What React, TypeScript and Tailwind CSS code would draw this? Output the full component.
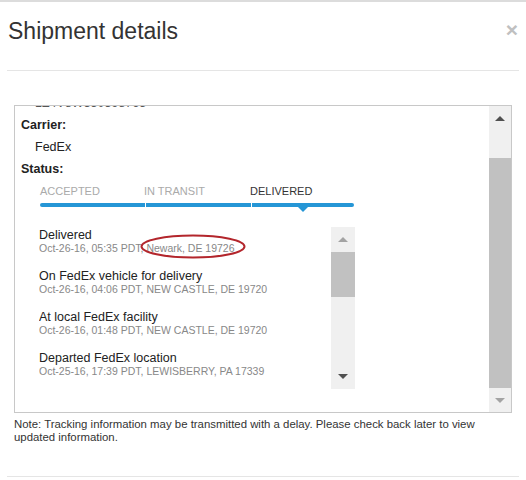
import React from 'react'

interface TrackingEvent {
  title: string
  detail: string
}

const events: TrackingEvent[] = [
  { title: 'Delivered', detail: 'Oct-26-16, 05:35 PDT, Newark, DE 19726' },
  { title: 'On FedEx vehicle for delivery', detail: 'Oct-26-16, 04:06 PDT, NEW CASTLE, DE 19720' },
  { title: 'At local FedEx facility', detail: 'Oct-26-16, 01:48 PDT, NEW CASTLE, DE 19720' },
  { title: 'Departed FedEx location', detail: 'Oct-25-16, 17:39 PDT, LEWISBERRY, PA 17339' },
]

function Arrow({ up, color }: { up?: boolean; color: string }) {
  return (
    <svg width="10" height="5" viewBox="0 0 10 5">
      <polygon points={up ? '0,5 10,5 5,0' : '0,0 10,0 5,5'} fill={color} />
    </svg>
  )
}

export default function App() {
  return (
    <div className="w-[526px] h-[480px] bg-white border-t-2 border-[#dcdcdc] font-['Liberation_Sans',Arial,sans-serif] text-[#333] overflow-hidden">
      {/* Header */}
      <div className="mx-[7px] h-[69px] border-b border-[#e5e5e5] flex items-start justify-between pt-[16px]">
        <h1 className="pl-[1px] text-[23px] leading-[26px] text-[#333]">Shipment details</h1>
        <span className="mt-[1px] mr-[1px] text-[21px] leading-[21px] font-bold text-[#c0c0c0]">×</span>
      </div>

      {/* Tracking box */}
      <div className="mx-[14px] mt-[34px] h-[308px] border border-[#c8c8c8] flex">
        <div className="flex-1 overflow-hidden">
          <div className="-mt-[14px] pl-[6px] text-[12.5px]">
            <div className="h-[22px] leading-[22px] pl-[14px] text-[#555]">1Z4V8W350398765</div>
            <div className="h-[22px] leading-[22px] font-bold text-[#222]">Carrier:</div>
            <div className="h-[22px] leading-[22px] pl-[14px] text-[#222]">FedEx</div>
            <div className="h-[22px] leading-[22px] font-bold text-[#222]">Status:</div>

            {/* Progress */}
            <div className="ml-[19px] w-[314px] pt-[5px]">
              <div className="flex text-[11px] leading-[13px]">
                <span className="w-[104px] text-[#aaa]">ACCEPTED</span>
                <span className="w-[106px] text-[#aaa]">IN TRANSIT</span>
                <span className="w-[104px] text-[#333]">DELIVERED</span>
              </div>
              <div className="mt-[5px] h-[4px] flex gap-px rounded-full overflow-hidden">
                <div className="w-[105px] bg-[#2596d6]" />
                <div className="w-[105px] bg-[#2596d6]" />
                <div className="w-[102px] bg-[#2596d6]" />
              </div>
              <div className="pl-[258px] h-[5px] flex">
                <Arrow color="#2596d6" />
              </div>
            </div>

            {/* Events list */}
            <div className="ml-[18px] mt-[15px] w-[316px] h-[162px] flex">
              <div className="relative flex-1 overflow-hidden pt-[2px]">
                {events.map((e) => (
                  <div key={e.detail} className="h-[41px]">
                    <div className="text-[12.5px] leading-[13px] text-[#222]">{e.title}</div>
                    <div className="text-[10.5px] leading-[13px] text-[#888]">{e.detail}</div>
                  </div>
                ))}
                <svg className="absolute left-[101px] top-[7px]" width="106" height="25" viewBox="0 0 106 25">
                  <ellipse cx="53" cy="12.5" rx="51.5" ry="11" fill="none" stroke="#b3262c" strokeWidth="2" />
                </svg>
              </div>
              <div className="w-[24px] bg-[#f0f0f0] flex flex-col">
                <div className="h-[25px] flex items-center justify-center">
                  <Arrow up color="#a3a3a3" />
                </div>
                <div className="h-[45px] bg-[#c1c1c1]" />
                <div className="flex-1" />
                <div className="h-[25px] flex items-center justify-center">
                  <Arrow color="#505050" />
                </div>
              </div>
            </div>
          </div>
        </div>

        {/* Outer scrollbar */}
        <div className="w-[22px] bg-[#f0f0f0] flex flex-col">
          <div className="h-[24px] flex items-center justify-center">
            <Arrow up color="#505050" />
          </div>
          <div className="flex-1 pt-[28px] flex flex-col">
            <div className="flex-1 bg-[#c1c1c1]" />
          </div>
          <div className="h-[24px] flex items-center justify-center">
            <Arrow color="#a3a3a3" />
          </div>
        </div>
      </div>

      <p className="px-[14px] mt-[5px] text-[11.4px] leading-[13px] text-[#333]">
        Note: Tracking information may be transmitted with a delay. Please check back later to view
        <br />
        updated information.
      </p>

      <div className="mx-[7px] mt-[32px] border-t border-[#e5e5e5]" />
    </div>
  )
}
